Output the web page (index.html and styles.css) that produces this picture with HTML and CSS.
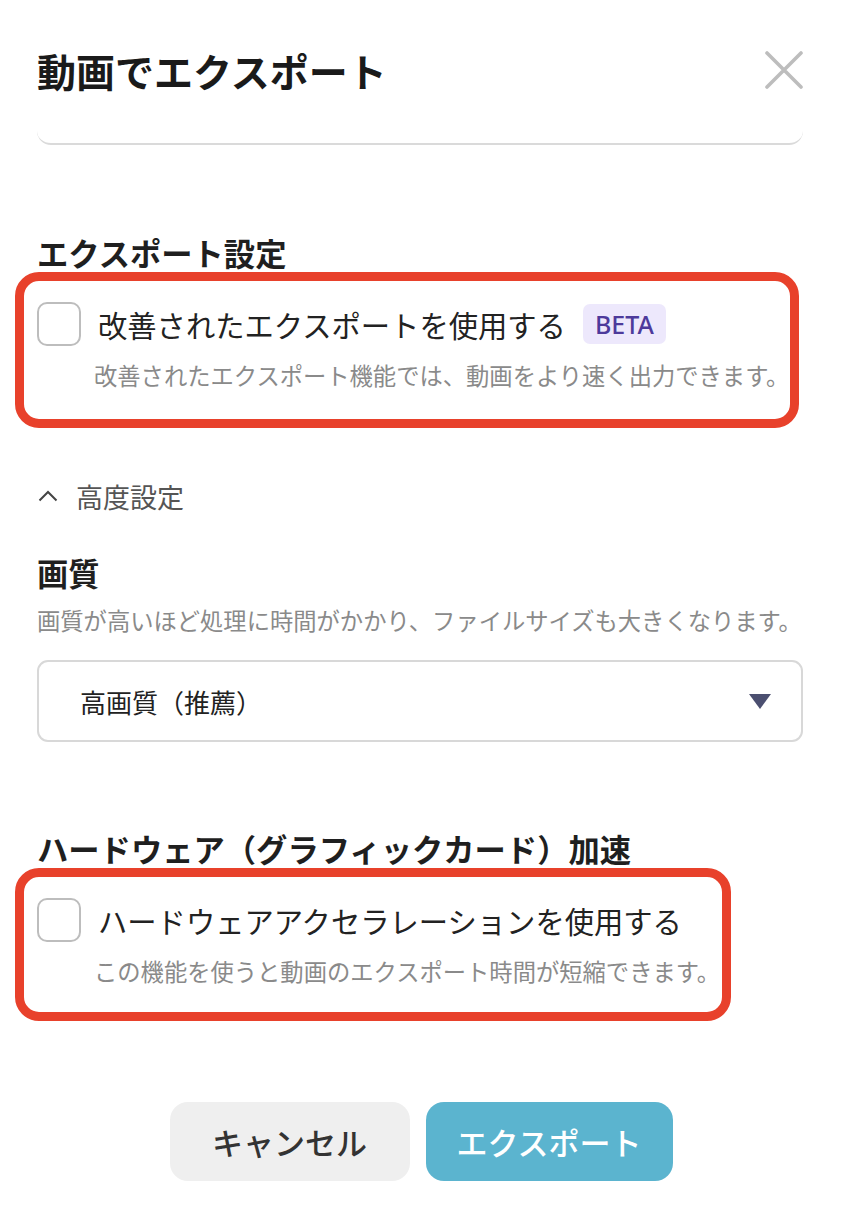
FILE: index.html
```html
<!DOCTYPE html>
<html lang="ja">
<head>
<meta charset="utf-8">
<title>動画でエクスポート</title>
<link rel="stylesheet" href="styles.css">
</head>
<body>
<div class="modal">
  <header class="modal-header">
    <h1 class="modal-title">動画でエクスポート</h1>
    <button class="close-btn" aria-label="閉じる">
      <svg width="38" height="38" viewBox="0 0 38 38"><path d="M2 2 L36 36 M36 2 L2 36" stroke="#bdbdbd" stroke-width="3.6" stroke-linecap="round" fill="none"/></svg>
    </button>
  </header>
  <div class="scroll-remnant"></div>

  <h2 class="section-title first">エクスポート設定</h2>
  <div class="highlight">
    <label class="check-row">
      <span class="checkbox"></span>
      <span class="check-label">改善されたエクスポートを使用する</span>
      <span class="badge">BETA</span>
    </label>
    <p class="check-desc">改善されたエクスポート機能では、動画をより速く出力できます。</p>
  </div>

  <div class="advanced">
    <svg class="chevron" width="20" height="12" viewBox="0 0 20 12"><path d="M1.5 10.5 L10 2 L18.5 10.5" stroke="#444" stroke-width="2" fill="none"/></svg>
    <span>高度設定</span>
  </div>

  <h2 class="section-title quality">画質</h2>
  <p class="field-desc">画質が高いほど処理に時間がかかり、ファイルサイズも大きくなります。</p>
  <div class="select">
    <span class="select-value">高画質（推薦）</span>
    <svg class="select-arrow" width="22" height="15" viewBox="0 0 22 15"><path d="M0 0 H22 L11 15 Z" fill="#4b4f70"/></svg>
  </div>

  <h2 class="section-title hw">ハードウェア（グラフィックカード）加速</h2>
  <div class="highlight hw-box">
    <label class="check-row">
      <span class="checkbox"></span>
      <span class="check-label">ハードウェアアクセラレーションを使用する</span>
    </label>
    <p class="check-desc">この機能を使うと動画のエクスポート時間が短縮できます。</p>
  </div>

  <div class="actions">
    <button class="btn btn-cancel">キャンセル</button>
    <button class="btn btn-export">エクスポート</button>
  </div>
</div>
</body>
</html>
```

FILE: styles.css
```css
* { box-sizing: border-box; }
html, body {
  margin: 0;
  padding: 0;
  background: #ffffff;
}
body {
  font-family: "Noto Sans CJK JP", "Noto Sans", sans-serif;
  color: #222;
}
.modal {
  padding: 0 39px 40px 37px;
}
.modal-header {
  display: flex;
  justify-content: space-between;
  align-items: center;
  height: 50px;
  margin-top: 45px;
}
.modal-title {
  margin: 0;
  font-size: 39px;
  line-height: 50px;
  font-weight: 700;
  color: #1a1a1a;
}
.close-btn {
  border: 0;
  background: none;
  padding: 0;
  width: 38px;
  height: 38px;
  display: flex;
}
.scroll-remnant {
  height: 50px;
  border-bottom: 2px solid #dadada;
  border-radius: 0 0 14px 14px;
}
.section-title {
  margin: 89px 0 0 0;
  font-size: 31.3px;
  line-height: 38px;
  font-weight: 700;
  color: #1f1f1f;
}
.section-title.quality {
  margin-top: 38px;
}
.section-title.hw {
  margin-top: 88px;
}
.highlight {
  display: table;
  margin-left: -22px;
  border: 9px solid #e8412b;
  border-radius: 24px;
  padding: 21px 1px 28px 13px;
}
.highlight.hw-box {
  padding-bottom: 25px;
  padding-right: 2px;
}
.check-row {
  display: flex;
  align-items: center;
  height: 44px;
}
.checkbox {
  width: 44px;
  height: 44px;
  border: 2px solid #bdbdbd;
  border-radius: 10px;
  background: #fff;
  flex: none;
}
.check-label {
  margin-left: 17px;
  font-size: 29.3px;
  line-height: 40px;
  color: #222;
  white-space: nowrap;
}
.badge {
  margin-left: 17px;
  height: 40px;
  padding: 0 12px;
  display: flex;
  align-items: center;
  background: #ede8fc;
  color: #4d3a9b;
  border-radius: 7px;
  font-family: "Noto Sans", "Open Sans", sans-serif;
  font-size: 25px;
  font-weight: 500;
}
.check-desc {
  margin: 13px 0 0 57px;
  font-size: 23.3px;
  line-height: 32px;
  color: #8a8a8a;
  white-space: nowrap;
}
.advanced {
  margin-top: 48px;
  display: flex;
  align-items: center;
  height: 40px;
  font-size: 27px;
  color: #555;
}
.chevron {
  margin-left: 1px;
  margin-right: 18px;
}
.field-desc {
  margin: 12px 0 0 0;
  font-size: 23.3px;
  line-height: 32px;
  color: #8a8a8a;
  white-space: nowrap;
}
.select {
  margin-top: 24px;
  height: 82px;
  border: 2px solid #d8d8d8;
  border-radius: 11px;
  display: flex;
  align-items: center;
  justify-content: space-between;
  padding: 0 30px 0 41px;
}
.select-value {
  font-size: 26px;
  color: #222;
}
.actions {
  margin-top: 81px;
  display: flex;
  justify-content: center;
  gap: 16px;
  padding-left: 2px;
}
.btn {
  height: 79px;
  border: 0;
  border-radius: 18px;
  font-family: "Noto Sans CJK JP", sans-serif;
  font-size: 31px;
  font-weight: 500;
}
.btn-cancel {
  width: 240px;
  background: #efefef;
  color: #333;
}
.btn-export {
  width: 247px;
  background: #5bb4cf;
  color: #fff;
}
```
